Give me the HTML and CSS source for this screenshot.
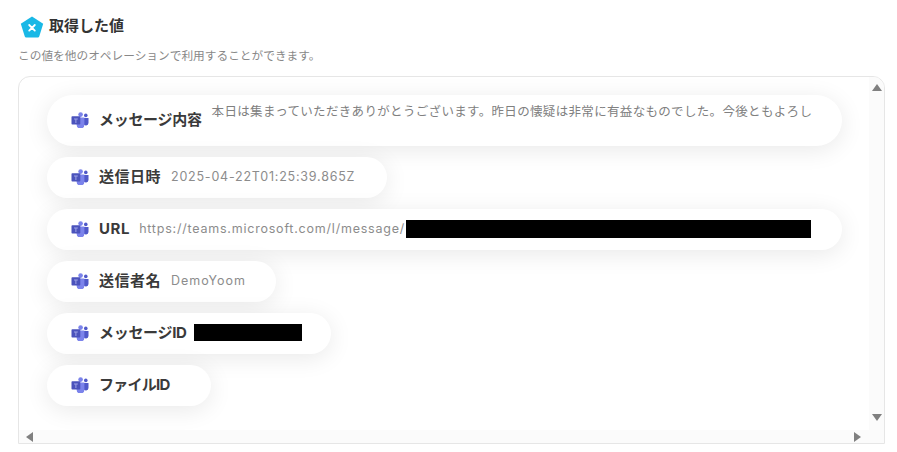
FILE: index.html
```html
<!DOCTYPE html>
<html lang="ja">
<head>
<meta charset="utf-8">
<title>取得した値</title>
<link rel="stylesheet" href="styles.css">
</head>
<body>
<svg width="0" height="0" class="defs">
  <symbol id="teams" viewBox="0 0 18 16">
    <circle cx="9.6" cy="2.6" r="2.3" fill="#7b83eb"/>
    <circle cx="14.8" cy="3.4" r="1.8" fill="#5059c9"/>
    <path d="M12.4 6h5.1v5a2.6 2.6 0 0 1-5.1 .6z" fill="#5059c9"/>
    <path d="M5 5.4h8.4v7a3.9 3.900 0 0 1-7.800 .3z" fill="#7b83eb"/>
    <rect x="0.500" y="4.200" width="8.800" height="8.400" rx="0.800" fill="#4b53bc"/>
    <path d="M3 6.400h3.800v1H5.400v3.600H4.400V7.400H3z" fill="#9ea3e6"/>
  </symbol>
</svg>
<header class="title">
  <svg class="badge" viewBox="0 0 24 22" width="24" height="22">
    <path d="M12 0.500 23.200 7.800 19.200 20.500a1.500 1.500 0 0 1-1.300 1H6.100a1.500 1.500 0 0 1-1.300-1L0.800 7.800z" fill="#19b8e6"/>
    <path d="M9.200 9 14.800 14.600M14.800 9 9.200 14.600" stroke="#fff" stroke-width="1.800" stroke-linecap="round"/>
  </svg>
  <h1 class="heading">取得した値</h1>
</header>
<p class="lead">この値を他のオペレーションで利用することができます。</p>
<section class="box">
  <div class="main">
    <div class="list">
      <div class="pill pill-wide pill-tall">
        <svg class="teams"><use href="#teams"/></svg>
        <span class="name name-kana">メッセージ内容</span>
        <span class="value value-raised">本日は集まっていただきありがとうございます。昨日の懐疑は非常に有益なものでした。今後ともよろし</span>
      </div>
      <div class="pill pill-date">
        <svg class="teams"><use href="#teams"/></svg>
        <span class="name name-kanji">送信日時</span>
        <span class="value">2025-04-22T01:25:39.865Z</span>
      </div>
      <div class="pill pill-wide">
        <svg class="teams"><use href="#teams"/></svg>
        <span class="name name-url">URL</span>
        <span class="value">https://teams.microsoft.com/l/message/</span>
        <span class="mask mask-url"></span>
      </div>
      <div class="pill pill-sender">
        <svg class="teams"><use href="#teams"/></svg>
        <span class="name name-kanji">送信者名</span>
        <span class="value value-sender">DemoYoom</span>
      </div>
      <div class="pill pill-msgid">
        <svg class="teams"><use href="#teams"/></svg>
        <span class="name name-kana">メッセージID</span>
        <span class="mask mask-id"></span>
      </div>
      <div class="pill pill-file">
        <svg class="teams"><use href="#teams"/></svg>
        <span class="name name-file">ファイルID</span>
      </div>
    </div>
    <div class="vbar">
      <span class="arrow arrow-up"></span>
      <span class="arrow arrow-down"></span>
    </div>
  </div>
  <div class="hbar">
    <span class="arrow arrow-left"></span>
    <span class="arrow arrow-right"></span>
  </div>
</section>
</body>
</html>
```
FILE: styles.css
```css
* { box-sizing: border-box; }
html, body { height: 100%; }
body {
  margin: 0;
  height: 452px;
  overflow: hidden;
  background: #fff;
  font-family: Inter, "Noto Sans CJK JP", sans-serif;
  color: #333;
  padding: 15px 12px 0 18px;
}
.defs { position: absolute; }
.title { display: flex; align-items: center; gap: 5px; height: 23px; padding-left: 2px; }
.badge { display: block; flex: none; }
.heading { margin: -2px 0 0; font-size: 15px; font-weight: 700; line-height: 23px; color: #333; }
.lead { margin: 8px 0 0; font-size: 11.7px; line-height: 20px; color: #888; height: 20px; }
.box {
  margin-top: 10px;
  width: 867px;
  height: 368px;
  border: 1px solid #e6e6e6;
  border-radius: 12px 12px 0 0;
  display: flex;
  flex-direction: column;
  overflow: hidden;
}
.main { flex: 1; display: flex; min-height: 0; }
.list {
  flex: 1;
  min-width: 0;
  padding: 18px 0 0 28px;
  display: flex;
  flex-direction: column;
  align-items: flex-start;
  gap: 11px;
}
.pill {
  height: 41px;
  flex: none;
  display: flex;
  align-items: center;
  padding: 0 0 2px 24px;
  background: #fff;
  border-radius: 26px;
  box-shadow: 0 4px 24px rgba(0, 0, 0, 0.09);
  white-space: nowrap;
  overflow: hidden;
}
.pill-wide { width: 795px; }
.pill-tall { height: 51px; }
.pill-date { width: 340px; }
.pill-sender { width: 229px; }
.pill-msgid { width: 284px; }
.pill-file { width: 164px; }
.teams { width: 18px; height: 16px; flex: none; margin-right: 10px; }
.name { font-size: 15px; font-weight: 700; color: #3a3a3a; margin: 0 10px 2px 0; }
.name-kana { letter-spacing: -0.3px; }
.name-kanji { letter-spacing: 0.5px; }
.name-url { letter-spacing: 0.6px; margin: 0 9px 0 0; }
.name-file { letter-spacing: -0.75px; }
.value { font-size: 12.5px; color: #8c8c8c; letter-spacing: 0.78px; }
.value-sender { letter-spacing: 0.96px; }
.value-raised { letter-spacing: 0.33px; position: relative; top: -9px; color: #808080; }
.mask { display: block; background: #000; flex: none; }
.mask-url { width: 405px; height: 18px; margin-left: 1px; }
.mask-id { width: 108px; height: 17px; margin-left: -3px; }
.vbar {
  flex: none;
  width: 15px;
  background: #fbfbfb;
  display: flex;
  flex-direction: column;
  justify-content: space-between;
  align-items: center;
  padding: 7px 0 9px;
}
.hbar {
  flex: none;
  height: 13px;
  background: #fbfbfb;
  display: flex;
  justify-content: space-between;
  align-items: center;
  padding: 0 23px 0 7px;
}
.arrow { display: block; width: 0; height: 0; border-style: solid; border-color: transparent; }
.arrow-up { border-width: 0 5px 7px; border-bottom-color: #808080; }
.arrow-down { border-width: 7px 5px 0; border-top-color: #808080; }
.arrow-left { border-width: 5px 7px 5px 0; border-right-color: #808080; }
.arrow-right { border-width: 5px 0 5px 7px; border-left-color: #808080; }
```
